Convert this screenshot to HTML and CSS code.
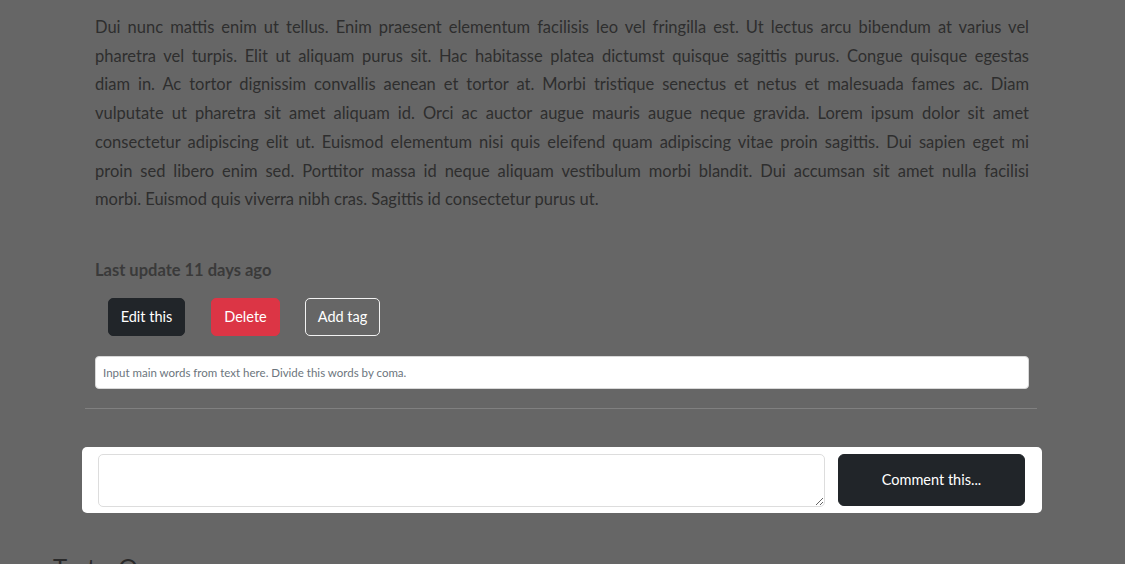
FILE: index.html
```html
<!DOCTYPE html>
<html lang="en">
<head>
<meta charset="utf-8">
<title>Post</title>
<link rel="stylesheet" href="styles.css">
</head>
<body>
<main class="page">
  <article class="post">
    <div class="text">
      <span class="ln">Dui nunc mattis enim ut tellus. Enim praesent elementum facilisis leo vel fringilla est. Ut lectus arcu bibendum at varius vel</span>
      <span class="ln">pharetra vel turpis. Elit ut aliquam purus sit. Hac habitasse platea dictumst quisque sagittis purus. Congue quisque egestas</span>
      <span class="ln">diam in. Ac tortor dignissim convallis aenean et tortor at. Morbi tristique senectus et netus et malesuada fames ac. Diam</span>
      <span class="ln">vulputate ut pharetra sit amet aliquam id. Orci ac auctor augue mauris augue neque gravida. Lorem ipsum dolor sit amet</span>
      <span class="ln">consectetur adipiscing elit ut. Euismod elementum nisi quis eleifend quam adipiscing vitae proin sagittis. Dui sapien eget mi</span>
      <span class="ln">proin sed libero enim sed. Porttitor massa id neque aliquam vestibulum morbi blandit. Dui accumsan sit amet nulla facilisi</span>
      <span class="ln last">morbi. Euismod quis viverra nibh cras. Sagittis id consectetur purus ut.</span>
    </div>
    <p class="updated">Last update 11 days ago</p>
    <div class="actions">
      <button class="btn btn-dark btn-edit">Edit this</button>
      <button class="btn btn-red btn-delete">Delete</button>
      <button class="btn btn-outline btn-tag">Add tag</button>
    </div>
    <input class="tags" type="text" placeholder="Input main words from text here. Divide this words by coma.">
    <hr class="sep">
  </article>
  <form class="comment">
    <textarea class="comment-input"></textarea>
    <button type="button" class="btn btn-dark comment-btn">Comment this...</button>
  </form>
  <h2 class="next">TestsyOne</h2>
</main>
</body>
</html>
```

FILE: styles.css
```css
* { box-sizing: border-box; }
html, body { margin: 0; padding: 0; }
body {
  background: #666666;
  font-family: Lato, "Open Sans", sans-serif;
  color: #2d2d2d;
  overflow: hidden;
  height: 564px;
}
.page { padding-top: 13px; }
.post {
  width: 952px;
  margin-left: 85px;
  padding: 0 8px 0 10px;
}
.text {
  font-size: 16.5px;
  line-height: 28.7px;
  color: #2e2e2e;
}
.ln {
  display: block;
  text-align: justify;
  text-align-last: justify;
}
.ln.last { text-align-last: left; }
.updated {
  margin: 45px 0 0;
  font-size: 16.5px;
  line-height: 22px;
  font-weight: 700;
  color: #3a3a3a;
}
.actions {
  display: flex;
  gap: 26px;
  margin: 17px 0 0 13px;
}
.btn {
  font-family: Lato, "Open Sans", sans-serif;
  font-size: 14.5px;
  height: 38px;
  padding: 0;
  border-radius: 5px;
  border: 1px solid transparent;
  color: #ffffff;
  cursor: pointer;
}
.btn-edit { width: 77px; }
.btn-delete { width: 69px; }
.btn-tag { width: 75px; margin-left: -1px; }
.btn-dark { background: #212529; border-color: #212529; }
.btn-red { background: #dc3545; border-color: #dc3545; }
.btn-outline { background: transparent; border-color: #f2f2f2; }
.tags {
  display: block;
  width: 934px;
  height: 33px;
  margin-top: 20px;
  border: 1px solid #d8d8d8;
  border-radius: 4px;
  background: #ffffff;
  padding: 0 7px;
  font-family: Lato, sans-serif;
  font-size: 11.5px;
}
.tags::placeholder { color: #6c757d; }
.sep {
  margin: 19px -8px 0 -10px;
  border: 0;
  border-top: 1px solid #808080;
}
.comment {
  display: flex;
  align-items: flex-start;
  gap: 13px;
  width: 960px;
  margin: 38px 0 0 82px;
  padding: 7px 17px 6px 16px;
  background: #ffffff;
  border-radius: 5px;
}
.comment-input {
  width: 727px;
  height: 53px;
  border: 1px solid #dddddd;
  border-radius: 5px;
  resize: vertical;
  margin: 0;
}
.comment-btn {
  width: 187px;
  height: 52px;
  border-radius: 6px;
}
.next {
  margin: 39px 0 0 53px;
  font-size: 24px;
  font-weight: 400;
  color: #2a2a2a;
}
```
